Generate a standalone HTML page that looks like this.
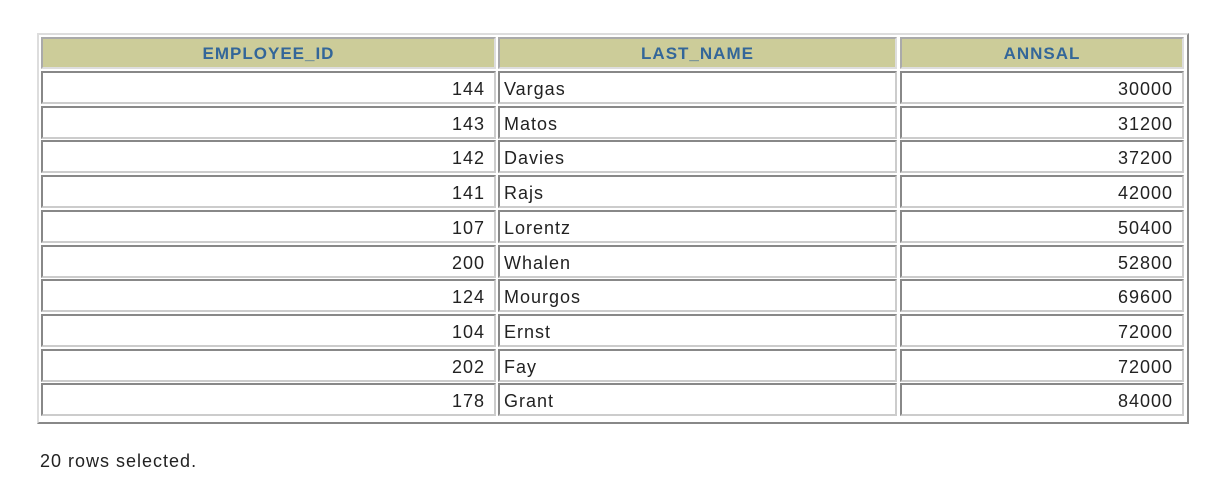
<!DOCTYPE html>
<html><head><style>
body{margin:0;width:1226px;height:495px;background:#fff;font-family:"Liberation Sans",Arial,sans-serif;position:relative;overflow:hidden}
.t{position:absolute;left:37px;top:33px;width:1148px;height:387px;border-left:2px solid #ddd;border-top:2px solid #ddd;border-right:2px solid #888;border-bottom:2px solid #888}
.c{position:absolute;box-sizing:border-box;border-top:2px solid #888;border-left:2px solid #888;border-right:2px solid #ccc;border-bottom:2px solid #ccc;font-size:18px;letter-spacing:1px;color:#222;line-height:32px;padding:0 8px 0 8px;white-space:nowrap}
.h{background:#cccc99;color:#336699;font-weight:bold;text-align:center;border-color:#aaa #ddd #ddd #aaa;line-height:30px;font-size:17px;letter-spacing:1px}
.r{text-align:right;padding-right:9px}
.l{padding-left:4px}
.f{position:absolute;left:40px;top:451px;font-size:18px;letter-spacing:1px;color:#222}
</style></head><body>
<div class="t"></div>
<div class="c h" style="left:41px;top:37px;width:455px;height:32px">EMPLOYEE_ID</div>
<div class="c h" style="left:498px;top:37px;width:399px;height:32px">LAST_NAME</div>
<div class="c h" style="left:900px;top:37px;width:284px;height:32px">ANNSAL</div>
<div id="rows"></div>
<script>
var d=[[144,"Vargas",30000],[143,"Matos",31200],[142,"Davies",37200],[141,"Rajs",42000],[107,"Lorentz",50400],[200,"Whalen",52800],[124,"Mourgos",69600],[104,"Ernst",72000],[202,"Fay",72000],[178,"Grant",84000]];
var h="";
for(var i=0;i<d.length;i++){var t=Math.round(71+i*34.7);
h+='<div class="c r" style="left:41px;top:'+t+'px;width:455px;height:33px">'+d[i][0]+'</div>';
h+='<div class="c l" style="left:498px;top:'+t+'px;width:399px;height:33px">'+d[i][1]+'</div>';
h+='<div class="c r" style="left:900px;top:'+t+'px;width:284px;height:33px">'+d[i][2]+'</div>';}
document.getElementById("rows").innerHTML=h;
</script>
<div class="f">20 rows selected.</div>
</body></html>
